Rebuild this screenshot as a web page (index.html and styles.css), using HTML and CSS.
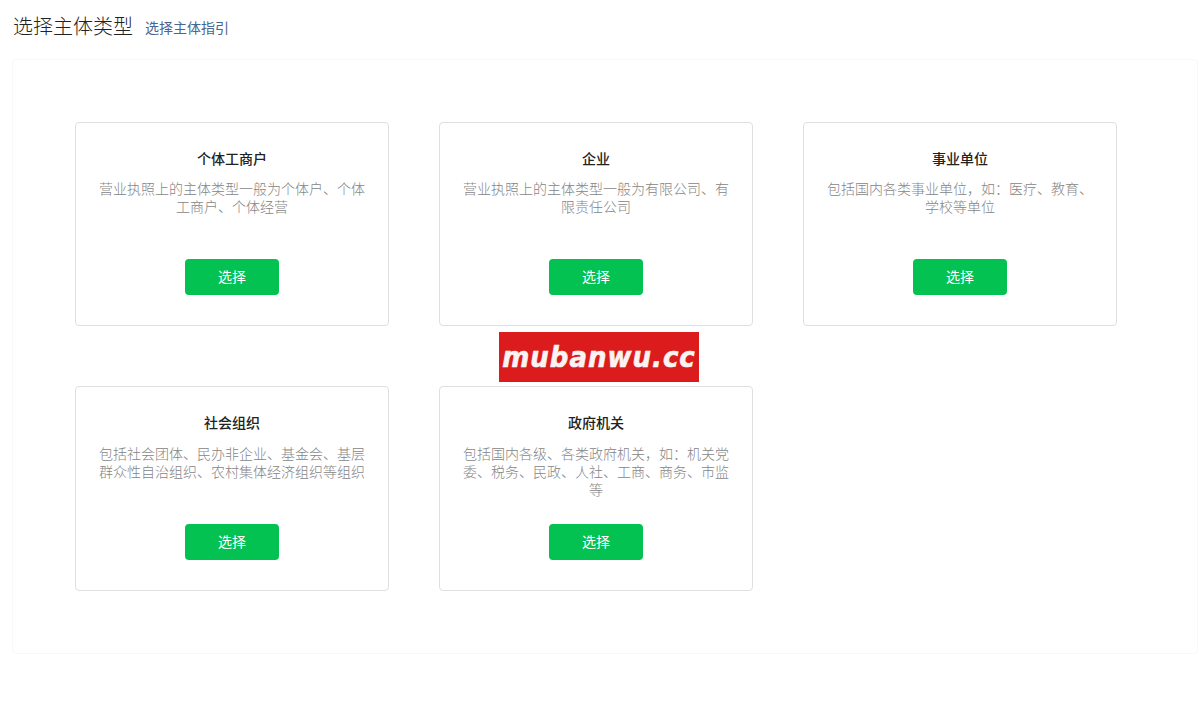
FILE: index.html
```html
<!DOCTYPE html>
<html lang="zh-CN">
<head>
    <meta charset="UTF-8">
    <meta name="viewport" content="width=device-width, initial-scale=1.0">
    <title>选择主体类型</title>
    <link rel="stylesheet" href="styles.css">
</head>
<body>

    <div class="page-head">
        <h1>选择主体类型</h1>
        <a class="guide-link" href="#">选择主体指引</a>
    </div>

    <div class="panel">
        <div class="type-grid">
            <div class="type-card">
                <h2>个体工商户</h2>
                <p>营业执照上的主体类型一般为个体户、个体工商户、个体经营</p>
                <button class="select-btn">选择</button>
            </div>
            <div class="type-card">
                <h2>企业</h2>
                <p>营业执照上的主体类型一般为有限公司、有限责任公司</p>
                <button class="select-btn">选择</button>
            </div>
            <div class="type-card">
                <h2>事业单位</h2>
                <p>包括国内各类事业单位，如：医疗、教育、学校等单位</p>
                <button class="select-btn">选择</button>
            </div>
            <div class="type-card">
                <h2>社会组织</h2>
                <p>包括社会团体、民办非企业、基金会、基层群众性自治组织、农村集体经济组织等组织</p>
                <button class="select-btn">选择</button>
            </div>
            <div class="type-card">
                <h2>政府机关</h2>
                <p>包括国内各级、各类政府机关，如：机关党委、税务、民政、人社、工商、商务、市监等</p>
                <button class="select-btn">选择</button>
            </div>
        </div>
    </div>

    <div class="watermark"><span>mubanwu.cc</span></div>

</body>
</html>
```

FILE: styles.css
```css
body {
    font-family: "Noto Sans CJK SC", "Liberation Sans", sans-serif;
    background: white;
    color: #222;
    margin: 0;
    padding: 0 1px 0 12px;
}
.page-head {
    display: flex;
    align-items: center;
    height: 59px;
    padding: 0 0 7px 1px;
    box-sizing: border-box;
}
h1 {
    font-size: 20px;
    font-weight: 300;
    line-height: 28px;
    margin: 0 12px 0 0;
}
.guide-link {
    font-size: 14px;
    line-height: 20px;
    color: #4a6591;
    text-decoration: none;
    margin-top: 2px;
}
.panel {
    height: 595px;
    box-sizing: border-box;
    border: 1px solid #f8f8f8;
    border-radius: 4px;
    padding: 62px 62px 0;
}
.type-grid {
    display: grid;
    grid-template-columns: repeat(3, 314px);
    grid-template-rows: 204px 204.55px;
    column-gap: 50px;
    row-gap: 60.45px;
}
.type-card {
    display: flex;
    flex-direction: column;
    align-items: center;
    box-sizing: border-box;
    border: 1px solid #dfdfdf;
    border-radius: 4px;
    padding: 25px 22px 30px;
    text-align: center;
}
.type-card h2 {
    font-size: 14px;
    font-weight: 500;
    line-height: 20px;
    color: #222;
    margin: 0 0 11.4px;
}
.type-card p {
    font-size: 14px;
    font-weight: 300;
    line-height: 18px;
    color: #858585;
    margin: 0;
}
.select-btn {
    width: 94px;
    height: 36px;
    margin-top: auto;
    background-color: #03c252;
    color: white;
    border: none;
    border-radius: 4px;
    font-family: inherit;
    font-size: 14px;
    line-height: 32px;
    padding: 0 0 2px;
    cursor: pointer;
}
.watermark {
    position: absolute;
    left: 499px;
    top: 332px;
    width: 200px;
    height: 50px;
    background: #dc1c1c;
    color: #f9f3f3;
    font-family: "DejaVu Sans", sans-serif;
    font-size: 26px;
    font-weight: bold;
    font-style: italic;
    line-height: 50px;
    letter-spacing: 1px;
    text-align: center;
    white-space: nowrap;
}
.watermark span {
    display: block;
    transform: scaleY(1.12);
    -webkit-text-stroke: 0.6px #f9f3f3;
}
```
